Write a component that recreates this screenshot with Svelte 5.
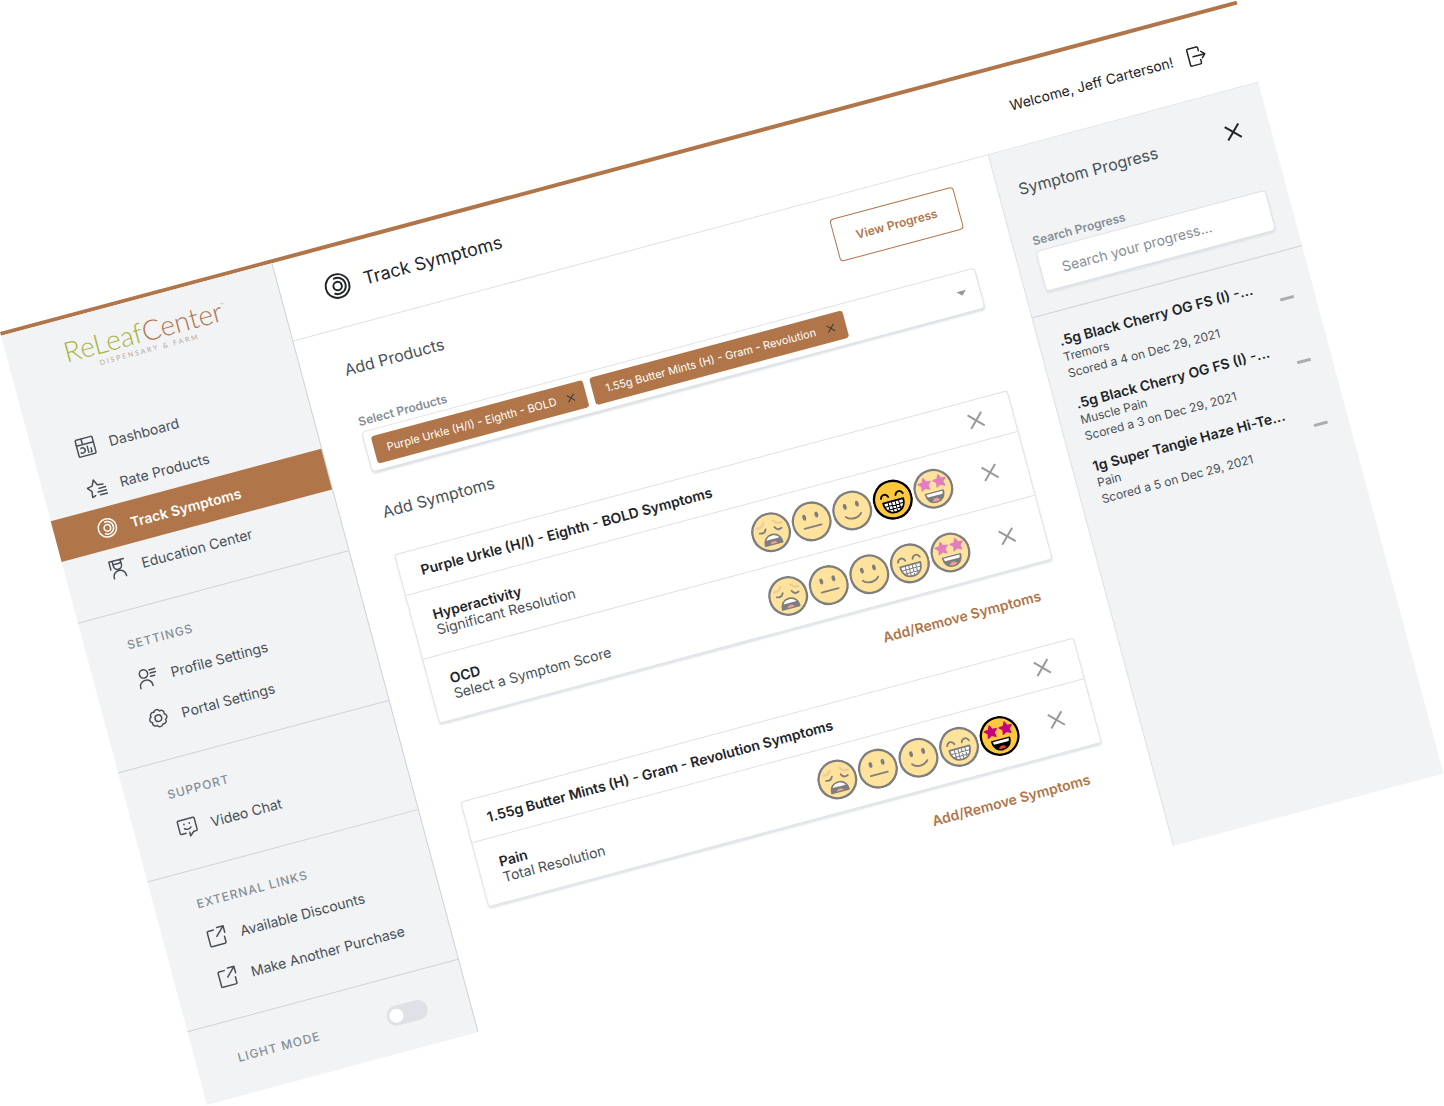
<script>
  const mainNav = [
    { icon: 'dashboard', label: 'Dashboard' },
    { icon: 'rate', label: 'Rate Products' },
    { icon: 'track', label: 'Track Symptoms', active: true },
    { icon: 'education', label: 'Education Center' }
  ];

  const groups = [
    {
      title: 'Settings',
      items: [
        { icon: 'profile', label: 'Profile Settings' },
        { icon: 'gear', label: 'Portal Settings' }
      ]
    },
    { title: 'Support', items: [{ icon: 'chat', label: 'Video Chat' }] },
    {
      title: 'External Links',
      items: [
        { icon: 'external', label: 'Available Discounts' },
        { icon: 'external', label: 'Make Another Purchase' }
      ]
    }
  ];

  const scores = ['Weary', 'Neutral', 'Slight smile', 'Beaming', 'Star-struck'];

  let chips = $state([
    'Purple Urkle (H/I) - Eighth - BOLD',
    '1.55g Butter Mints (H) - Gram - Revolution'
  ]);

  let cards = $state([
    {
      title: 'Purple Urkle (H/I) - Eighth - BOLD Symptoms',
      rows: [
        { name: 'Hyperactivity', note: 'Significant Resolution', score: 3 },
        { name: 'OCD', note: 'Select a Symptom Score', score: -1 }
      ]
    },
    {
      title: '1.55g Butter Mints (H) - Gram - Revolution Symptoms',
      rows: [{ name: 'Pain', note: 'Total Resolution', score: 4 }]
    }
  ]);

  const progress = [
    { product: '.5g Black Cherry OG FS (I) -...', symptom: 'Tremors', note: 'Scored a 4 on Dec 29, 2021' },
    { product: '.5g Black Cherry OG FS (I) -...', symptom: 'Muscle Pain', note: 'Scored a 3 on Dec 29, 2021' },
    { product: '1g Super Tangie Haze Hi-Te...', symptom: 'Pain', note: 'Scored a 5 on Dec 29, 2021' }
  ];
</script>

{#snippet icon(name)}
  <svg class="icon" viewBox="0 0 24 24" aria-hidden="true">
    {#if name === 'dashboard'}
      <rect x="1.5" y="1.5" width="21" height="21" rx="1.5" />
      <path d="M1.5 8.5h21M9 1.5v7M6 12.5a3.2 3.2 0 1 1-1 5.2M14 12v7.5M18 15v4.5h-1" />
    {:else if name === 'rate'}
      <path d="M8.5 21.5l-4 1.3 1-7.3L1 10.3l6.300-1L10.500 2.500l3.200 6.800 6.800.9" />
      <path d="M14.500 14h8.500M12.500 18h10.500M14.500 22h8.500" />
    {:else if name === 'track'}
      <circle cx="12" cy="12" r="11" />
      <circle cx="12" cy="12" r="3.900" />
      <path d="M10.500 4.600a7.500 7.500 0 1 1-2.500 13.700" />
    {:else if name === 'education'}
      <path d="M3 2h18M7 2v3.500c3 1.200 7 1.200 10 0V2M7 5.500V8a5 5 0 0 0 10 0V5.500M3 2v9.500M4.500 23v-1.500a7.500 7 0 0 1 15 0V23" />
    {:else if name === 'profile'}
      <circle cx="8.500" cy="6.500" r="5" />
      <path d="M1 23v-2a7.500 6.500 0 0 1 15 0v2M16 3.500h7.500M16.500 7.500h7M16 11.500h5" />
    {:else if name === 'gear'}
      <circle cx="12" cy="12" r="4" />
      <path d="M8.600 3.900a3.600 3.600 0 0 1 6.800 0a3.600 3.600 0 0 1 4.700 4.700a3.600 3.600 0 0 1 0 6.800a3.600 3.600 0 0 1-4.700 4.700a3.600 3.600 0 0 1-6.800 0a3.600 3.600 0 0 1-4.700-4.700a3.600 3.600 0 0 1 0-6.800a3.600 3.600 0 0 1 4.700-4.700z" />
    {:else if name === 'chat'}
      <path d="M8.500 18.500H3a1.500 1.500 0 0 1-1.500-1.500V3.500A1.500 1.500 0 0 1 3 2h18a1.500 1.500 0 0 1 1.500 1.500V17a1.500 1.500 0 0 1-1.500 1.500h-3L13 23v-4.500" />
      <path d="M8 12.500c2 2.300 6 2.300 8 0M8.700 7.300v.6M15.300 7.300v.6" />
    {:else if name === 'external'}
      <path d="M10 3.500H3.500a1.500 1.500 0 0 0-1.500 1.500V21a1.500 1.500 0 0 0 1.500 1.500H19.500a1.500 1.500 0 0 0 1.500-1.500V14M12 12L22 2M14.500 1.500H22.500V9.500" />
    {:else if name === 'logout'}
      <path d="M16 6.500V3a1.500 1.500 0 0 0-1.500-1.500H4A1.500 1.500 0 0 0 2.500 3v18A1.500 1.500 0 0 0 4 22.500h10.500A1.500 1.500 0 0 0 16 21v-3.500M8 12h14.500M18.500 8l4 4-4 4" />
    {/if}
  </svg>
{/snippet}

{#snippet cross()}
  <svg class="cross" viewBox="0 0 14 14" aria-hidden="true"><path d="M0 0l14 14M14 0L0 14" /></svg>
{/snippet}

{#snippet face(n)}
  <svg class="face" viewBox="12 12 48 48" aria-hidden="true">
    <circle cx="36" cy="36" r="22.600" fill="#ffc83d" stroke="#000" stroke-width="2.800" />
    {#if n === 0}
      <g fill="none" stroke-linecap="round">
        <path d="M21 27.500c4 .5 7-1 9-4.500M51 27.500c-4 .5-7-1-9-4.500" stroke="#d99a3c" stroke-width="2.800" />
        <path d="M22.500 34c3.500 1.500 6.500.5 8-3M49.500 34c-3.500 1.500-6.500.5-8-3" stroke="#000" stroke-width="2.200" />
      </g>
      <path d="M25.500 50.500c0-7.500 4.500-11.500 10.500-11.500s10.500 4 10.500 11.500z" fill="#000" stroke="#000" stroke-width="2" stroke-linejoin="round" />
      <path d="M28 44.500c2.500-6 13.500-6 16 0z" fill="#fff" />
      <path d="M31.500 50c1-4 8-4 9 0z" fill="#ea3a2d" />
    {:else if n === 1}
      <ellipse cx="28.500" cy="29.500" rx="2.200" ry="3.600" />
      <ellipse cx="43.500" cy="29.500" rx="2.200" ry="3.600" />
      <path d="M25.500 42.500h21" stroke="#000" stroke-width="2.200" stroke-linecap="round" />
    {:else if n === 2}
      <ellipse cx="28.500" cy="29.500" rx="2.200" ry="3.600" />
      <ellipse cx="43.500" cy="29.500" rx="2.200" ry="3.600" />
      <path d="M26.500 41.500c4.500 5.500 14.500 5.500 19 0" fill="none" stroke="#000" stroke-width="2.200" stroke-linecap="round" />
    {:else if n === 3}
      <path d="M22.500 31.500c1.500-5 7.500-5 9 0M40.500 31.500c1.500-5 7.500-5 9 0" fill="none" stroke="#000" stroke-width="2.200" stroke-linecap="round" />
      <path d="M23.500 37.500h25c0 9-5 14-12.500 14s-12.500-5-12.500-14z" fill="#fff" stroke="#000" stroke-width="2.200" stroke-linejoin="round" />
      <path d="M24 42.500h24M26.500 47h19M29.500 38v12M33.800 38v13M38.200 38v13M42.500 38v12" stroke="#000" stroke-width="1.200" />
    {:else}
      <path d="M27 21l2.300 4.800 5.200.6-3.800 3.600 1 5.200-4.700-2.500-4.700 2.500 1-5.200-3.800-3.600 5.200-.6zM45.500 21l2.300 4.800 5.200.6-3.800 3.600 1 5.200-4.700-2.500-4.700 2.500 1-5.200-3.800-3.600 5.200-.6z" fill="#c6007e" stroke="#c6007e" stroke-width="1.500" stroke-linejoin="round" />
      <path d="M25 40.500h22c0 7.500-4.500 12-11 12s-11-4.500-11-12z" fill="#000" stroke="#000" stroke-width="2" stroke-linejoin="round" />
      <path d="M26 41h20l-1 3.500H27z" fill="#fff" />
      <path d="M31.500 50.500c1.500-4 7.500-4 9 0-2.500 1.500-6.500 1.500-9 0z" fill="#ea3a2d" />
    {/if}
  </svg>
{/snippet}

<div class="canvas">
  <div class="app">
    <aside class="sidebar">
      <a class="brand" href="#home">
        <span class="wordmark"><span class="leaf">ReLeaf</span>Center<sup>™</sup></span>
        <span class="tagline">DISPENSARY &amp; FARM</span>
      </a>
      <nav class="group first" aria-label="Main">
        {#each mainNav as item}
          <a class="item" class:active={item.active} href="#{item.icon}">{@render icon(item.icon)}{item.label}</a>
        {/each}
      </nav>
      {#each groups as group}
        <nav class="group" aria-label={group.title}>
          <h2 class="caption">{group.title}</h2>
          {#each group.items as item}
            <a class="item" href="#{item.icon}">{@render icon(item.icon)}{item.label}</a>
          {/each}
        </nav>
      {/each}
      <div class="mode">
        <label class="caption" for="mode">Light Mode</label>
        <input id="mode" type="checkbox" role="switch" />
      </div>
    </aside>

    <header class="topbar">
      <h1>{@render icon('track')}Track Symptoms</h1>
      <div class="welcome">
        <span>Welcome, Jeff Carterson!</span>
        <button type="button" aria-label="Log out">{@render icon('logout')}</button>
      </div>
    </header>

    <main>
      <div class="heading-row">
        <h2>Add Products</h2>
        <button class="outline" type="button">View Progress</button>
      </div>
      <label class="field-label" for="products">Select Products</label>
      <div class="select">
        {#each chips as chip, i}
          <span class="chip">
            {chip}
            <button type="button" aria-label="Remove {chip}" onclick={() => chips.splice(i, 1)}>{@render cross()}</button>
          </span>
        {/each}
        <input id="products" type="text" role="combobox" aria-expanded="false" aria-controls="symptoms" />
        <svg class="caret" viewBox="0 0 10 5" aria-hidden="true"><path d="M0 0h10L5 5z" /></svg>
      </div>

      <h2 class="symptoms-title" id="symptoms">Add Symptoms</h2>
      {#each cards as card}
        <section class="card">
          <div class="card-head">
            <h3>{card.title}</h3>
            <button class="remove" type="button" aria-label="Remove product">{@render cross()}</button>
          </div>
          {#each card.rows as row}
            <div class="row">
              <div class="symptom">
                <strong>{row.name}</strong>
                <span>{row.note}</span>
              </div>
              <div class="faces">
                {#each scores as label, n}
                  <button
                    type="button"
                    class:chosen={row.score === n}
                    aria-label={label}
                    aria-pressed={row.score === n}
                    onclick={() => (row.score = n)}>{@render face(n)}</button>
                {/each}
              </div>
              <button class="remove" type="button" aria-label="Remove {row.name}">{@render cross()}</button>
            </div>
          {/each}
        </section>
        <button class="link" type="button">Add/Remove Symptoms</button>
      {/each}
    </main>

    <aside class="panel">
      <div class="search">
        <div class="panel-head">
          <h2>Symptom Progress</h2>
          <button class="close" type="button" aria-label="Close">{@render cross()}</button>
        </div>
        <label class="field-label" for="search">Search Progress</label>
        <input id="search" type="text" placeholder="Search your progress..." />
      </div>
      <ul>
        {#each progress as entry}
          <li>
            <div>
              <strong>{entry.product}</strong>
              <span>{entry.symptom}</span>
              <span class="scored">{entry.note}</span>
            </div>
            <i class="dash"></i>
          </li>
        {/each}
      </ul>
    </aside>
  </div>
</div>

<style>
  :global(body) {
    margin: 0;
    background: #fff;
  }

  .canvas {
    box-sizing: border-box;
    height: 100vh;
    padding-top: 23%;
    overflow: hidden;
    font-family: Inter, 'Liberation Sans', sans-serif;
    font-size: 14px;
    color: #212529;
  }

  .canvas :global(*) {
    box-sizing: border-box;
  }

  .app {
    display: grid;
    grid-template: auto 1fr / 281px minmax(0, 1fr) 280px;
    grid-template-areas: 'side top top' 'side main panel';
    width: 88.64%;
    aspect-ratio: 8 / 5;
    border-top: 4px solid #b0764a;
    background: #fff;
    transform: rotate(-15deg);
    transform-origin: 0 0;
  }

  h1, h2, h3, ul {
    margin: 0;
    padding: 0;
    font-weight: 400;
  }

  button {
    padding: 0;
    border: 0;
    background: none;
    color: inherit;
    font: inherit;
    cursor: pointer;
  }

  svg {
    display: block;
  }

  .icon {
    flex: none;
    width: 20px;
    height: 20px;
    fill: none;
    stroke: currentColor;
    stroke-width: 1.8;
    stroke-linecap: round;
    stroke-linejoin: round;
  }

  .cross {
    width: 14px;
    height: 14px;
    overflow: visible;
    fill: none;
    stroke: currentColor;
    stroke-width: 2;
  }

  /* Sidebar */
  .sidebar {
    grid-area: side;
    border-right: 1px solid #ced4da;
    background: #f1f3f5;
    color: #495057;
  }

  .brand {
    display: flex;
    flex-direction: column;
    align-items: center;
    height: 108px;
    padding-top: 18px;
    font-family: Lato, sans-serif;
    text-decoration: none;
    color: #b0764a;
  }

  .wordmark {
    font-size: 28px;
    font-weight: 300;
    line-height: 29px;
  }

  .leaf {
    color: #a9b440;
  }

  sup {
    font-size: 5px;
    line-height: 1;
    vertical-align: 14px;
  }

  .tagline {
    font-size: 7px;
    line-height: 9px;
    letter-spacing: 2px;
    color: #b9a78f;
  }

  .group {
    padding-bottom: 21px;
    border-bottom: 1px solid #ced4da;
  }

  .caption {
    font-size: 12px;
    font-weight: 500;
    line-height: 16px;
    letter-spacing: 1px;
    text-transform: uppercase;
    color: #868e96;
  }

  h2.caption {
    padding: 26px 0 7px 42px;
  }

  .item {
    display: flex;
    align-items: center;
    gap: 14px;
    height: 42px;
    padding: 0 43px;
    color: #495057;
    text-decoration: none;
    white-space: nowrap;
  }

  .item.active {
    background: #b0764a;
    color: #fff;
    font-weight: 600;
  }

  .mode {
    display: flex;
    align-items: center;
    justify-content: space-between;
    height: 75px;
    padding: 0 42px;
  }

  #mode {
    appearance: none;
    display: flex;
    width: 42px;
    height: 20px;
    margin: 0;
    padding: 3px;
    border-radius: 10px;
    background: #dee2e6;
  }

  #mode::before {
    content: '';
    width: 14px;
    height: 14px;
    border-radius: 50%;
    background: #fff;
  }

  #mode:checked {
    justify-content: flex-end;
  }

  /* Top bar */
  .topbar {
    grid-area: top;
    display: flex;
    align-items: center;
    justify-content: space-between;
    height: 81px;
    padding: 0 43px 3px 44px;
    border-bottom: 1px solid #dee2e6;
  }

  h1 {
    display: flex;
    align-items: center;
    gap: 14px;
    font-size: 18px;
  }

  h1 :global(.icon) {
    width: 26px;
    height: 26px;
  }

  .welcome {
    display: flex;
    align-items: center;
    gap: 14px;
  }

  /* Main column */
  main {
    grid-area: main;
    padding: 21px 42px;
  }

  main h2, .panel h2 {
    font-size: 16px;
    line-height: 40px;
    color: #495057;
  }

  .heading-row {
    display: flex;
    justify-content: space-between;
    height: 44px;
  }

  .outline {
    padding: 0 21px 2px;
    border: 1px solid #b0764a;
    border-radius: 4px;
    color: #b0764a;
    font-size: 12px;
    font-weight: 600;
  }

  .field-label {
    display: block;
    margin: 22px 0 2px;
    font-size: 12px;
    font-weight: 600;
    line-height: 16px;
    color: #868e96;
  }

  .select, #search {
    height: 42px;
    border: 1px solid #dee2e6;
    border-radius: 4px;
    background: #fff;
    box-shadow: 0 2px 2px #dee2e6;
  }

  .select {
    display: flex;
    align-items: center;
    gap: 7px;
    padding: 0 13px 0 7px;
  }

  .chip {
    display: flex;
    align-items: center;
    gap: 12px;
    height: 28px;
    padding: 0 12px 0 13px;
    border-radius: 3px;
    background: #b0764a;
    color: #fff;
    font-size: 11px;
    white-space: nowrap;
  }

  .chip :global(.cross) {
    width: 7px;
    height: 7px;
    color: #343a40;
  }

  .select input {
    flex: 1;
    min-width: 0;
    border: 0;
    outline: 0;
    background: none;
    font: inherit;
  }

  .caret {
    width: 10px;
    height: 5px;
    fill: #999;
  }

  main .symptoms-title {
    margin: 31px 0 34px;
    line-height: 20px;
  }

  .card {
    border: 1px solid #dee2e6;
    border-radius: 3px;
    box-shadow: 0 2px 2px #dee2e6;
  }

  .card-head, .row {
    display: flex;
    align-items: center;
    padding: 0 30px 0 21px;
  }

  .card-head {
    justify-content: space-between;
    height: 41px;
  }

  h3 {
    font-size: 14px;
    font-weight: 600;
  }

  .row {
    height: 66px;
    border-top: 1px solid #dee2e6;
  }

  .symptom {
    display: flex;
    flex: 1;
    flex-direction: column;
    line-height: 16px;
    color: #495057;
  }

  strong {
    font-weight: 600;
    color: #212529;
  }

  .remove {
    padding-bottom: 2px;
    color: #999;
  }

  .faces {
    display: flex;
    gap: 2px;
    margin-right: 32px;
  }

  .faces button {
    opacity: 0.5;
  }

  .faces button.chosen {
    opacity: 1;
  }

  .face {
    width: 40px;
    height: 40px;
  }

  .link {
    display: block;
    margin: 22px 21px 39px auto;
    color: #b0764a;
    font-weight: 600;
    line-height: 20px;
  }

  /* Progress panel */
  .panel {
    grid-area: panel;
    border-left: 1px solid #dee2e6;
    background: #f1f3f5;
  }

  .search {
    padding: 21px 21px 21px 20px;
    border-bottom: 1px solid #ced4da;
  }

  .panel-head {
    display: flex;
    align-items: center;
    justify-content: space-between;
    height: 44px;
    padding: 0 9px 4px 0;
  }

  .close {
    color: #212529;
  }

  #search {
    display: block;
    width: 100%;
    padding: 0 21px;
    font: inherit;
  }

  #search::placeholder {
    color: #868e96;
    opacity: 1;
  }

  ul {
    display: grid;
    gap: 13px;
    padding: 20px 21px 20px 20px;
    list-style: none;
  }

  li {
    display: flex;
    align-items: center;
    justify-content: space-between;
  }

  li div {
    display: flex;
    flex-direction: column;
    font-size: 12px;
    line-height: 16px;
    color: #495057;
    white-space: nowrap;
  }

  li strong {
    font-size: 14px;
    line-height: 18px;
  }

  .scored {
    line-height: 18px;
  }

  .dash {
    width: 14px;
    height: 3px;
    background: #adadad;
  }
</style>
